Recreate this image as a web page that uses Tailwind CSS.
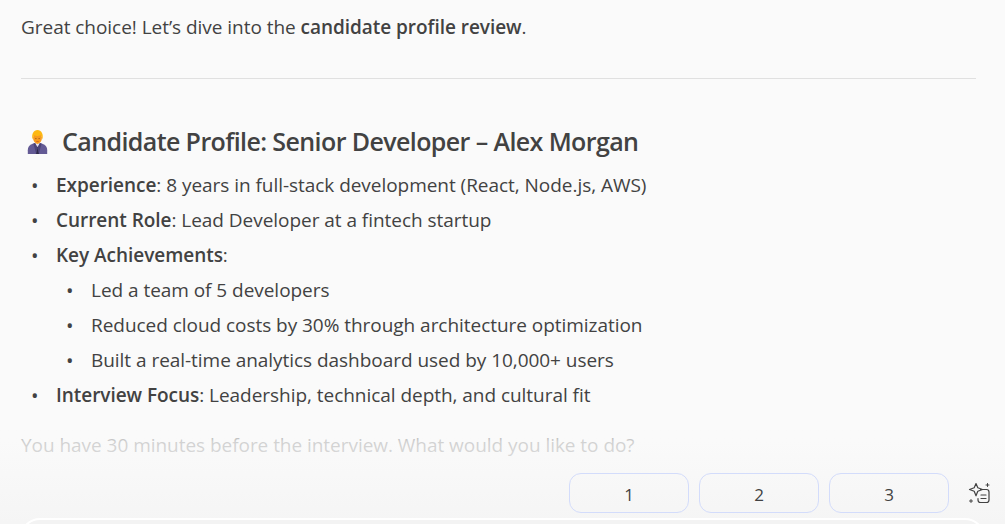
<!DOCTYPE html>
<html lang="en">
<head>
  <meta charset="UTF-8">
  <title>Candidate Profile</title>
  <script src="https://cdn.jsdelivr.net/npm/@tailwindcss/browser@4"></script>
</head>
<body class="h-[524px] w-[1005px] overflow-hidden bg-[#fafafa] font-['Open_Sans','Noto_Sans',sans-serif] text-[#424242]">
  <div class="relative h-[524px] overflow-hidden">
    <!-- Message -->
    <main class="px-[21px] pt-[14px] text-[19px] leading-[26px] tracking-[-0.04px]">
      <p>Great choice! Let’s dive into the <strong class="font-semibold">candidate profile review</strong>.</p>
      <hr class="mt-[38px] mr-[8px] border-t border-[#e0e0e0]">

      <h3 class="mt-[45px] flex items-center text-[25px] leading-[34px] font-semibold tracking-[-0.6px]">
        <svg class="mr-[14px] ml-[6px] h-[25px] w-[21px]" viewBox="0 0 26 26" preserveAspectRatio="none">
          <path d="M1 26v-4c0-3 1.500-5 4-6l4-1.500h8l4 1.500c2.500 1 4 3 4 6v4z" fill="#635a94"/>
          <path d="M10 14.500l3 5 3-5z" fill="#e6e2ee"/>
          <path d="M12 18.500h2l1 7.500h-4z" fill="#2f2a4a"/>
          <path d="M10 14.500l-2 1 3.500 10.500 1.500-6.500zM16 14.500l2 1-3.500 10.500-1.500-6.500z" fill="#4c4478"/>
          <ellipse cx="13" cy="9" rx="5.500" ry="6.500" fill="#f79a1f"/>
          <path d="M7 11C5 5 8.500 1 13 1s8 4 6 10c-.5-2-1-4-2.500-4.500-2 1-5.500 1-7 0-1.500.5-2 2.500-2.500 4.500z" fill="#fdb813"/>
          <path d="M11 9.500v1M15 9.500v1" stroke="#7a3f12" stroke-width="1"/>
          <path d="M11.500 13h3" stroke="#c9561a" stroke-width=".8"/>
        </svg>
        Candidate Profile: Senior Developer – Alex Morgan
      </h3>

      <ul class="mt-[10px] leading-[35px]">
        <li class="flex"><span class="w-[35px] pl-[10px] text-[20px]">•</span><span><strong class="font-semibold">Experience</strong>: 8 years in full-stack development (React, Node.js, AWS)</span></li>
        <li class="flex"><span class="w-[35px] pl-[10px] text-[20px]">•</span><span><strong class="font-semibold">Current Role</strong>: Lead Developer at a fintech startup</span></li>
        <li class="flex"><span class="w-[35px] pl-[10px] text-[20px]">•</span><span><strong class="font-semibold">Key Achievements</strong>:</span></li>
        <li class="flex pl-[35px]"><span class="w-[35px] pl-[10px] text-[20px]">•</span><span>Led a team of 5 developers</span></li>
        <li class="flex pl-[35px]"><span class="w-[35px] pl-[10px] text-[20px]">•</span><span>Reduced cloud costs by 30% through architecture optimization</span></li>
        <li class="flex pl-[35px]"><span class="w-[35px] pl-[10px] text-[20px]">•</span><span>Built a real-time analytics dashboard used by 10,000+ users</span></li>
        <li class="flex"><span class="w-[35px] pl-[10px] text-[20px]">•</span><span><strong class="font-semibold">Interview Focus</strong>: Leadership, technical depth, and cultural fit</span></li>
      </ul>

      <p class="mt-[19px]">You have 30 minutes before the interview. What would you like to do?</p>
    </main>

    <!-- Fade over the end of the message -->
    <div class="absolute inset-x-0 bottom-0 h-[110px] bg-gradient-to-b from-[#fafafa]/0 via-[#fafafa]/78 via-25% to-[#f5f5f5]"></div>

    <!-- Reply options -->
    <div class="absolute top-[473px] left-[569px] flex items-center gap-[10px]">
      <button class="h-[40px] w-[120px] rounded-[12px] border border-[#d3dcfb] pt-[3px] text-[17px] text-[#424242]">1</button>
      <button class="h-[40px] w-[120px] rounded-[12px] border border-[#d3dcfb] pt-[3px] text-[17px] text-[#424242]">2</button>
      <button class="h-[40px] w-[120px] rounded-[12px] border border-[#d3dcfb] pt-[3px] text-[17px] text-[#424242]">3</button>
      <svg class="ml-[9px] h-[24px] w-[24px]" viewBox="0 0 24 24" fill="none" stroke="#424242" stroke-width="1.200" stroke-linejoin="round" stroke-linecap="round">
        <path d="M8 2.500l1.800 4.200 4.700 1.800-4.700 1.800-1.800 4.500-1.800-4.500-4.700-1.800 4.700-1.800z"/>
        <path d="M12.500 8.500h6c1.500 0 2.500 1 2.500 2.500v8c0 1.500-1 2.500-2.500 2.500h-6c-1.500 0-2.500-1-2.500-2.500v-1.500"/>
        <path d="M13 14h5M13 17.500h5"/>
        <path d="M19.500 2.500v3M18 4h3M3 18.500v3M1.500 20h3" stroke-width="1"/>
      </svg>
    </div>

    <!-- Composer edge -->
    <div class="absolute top-[518px] left-[20px] h-[40px] w-[965px] rounded-[20px] border-2 border-white bg-[#f3f3f3]"></div>
  </div>
</body>
</html>
